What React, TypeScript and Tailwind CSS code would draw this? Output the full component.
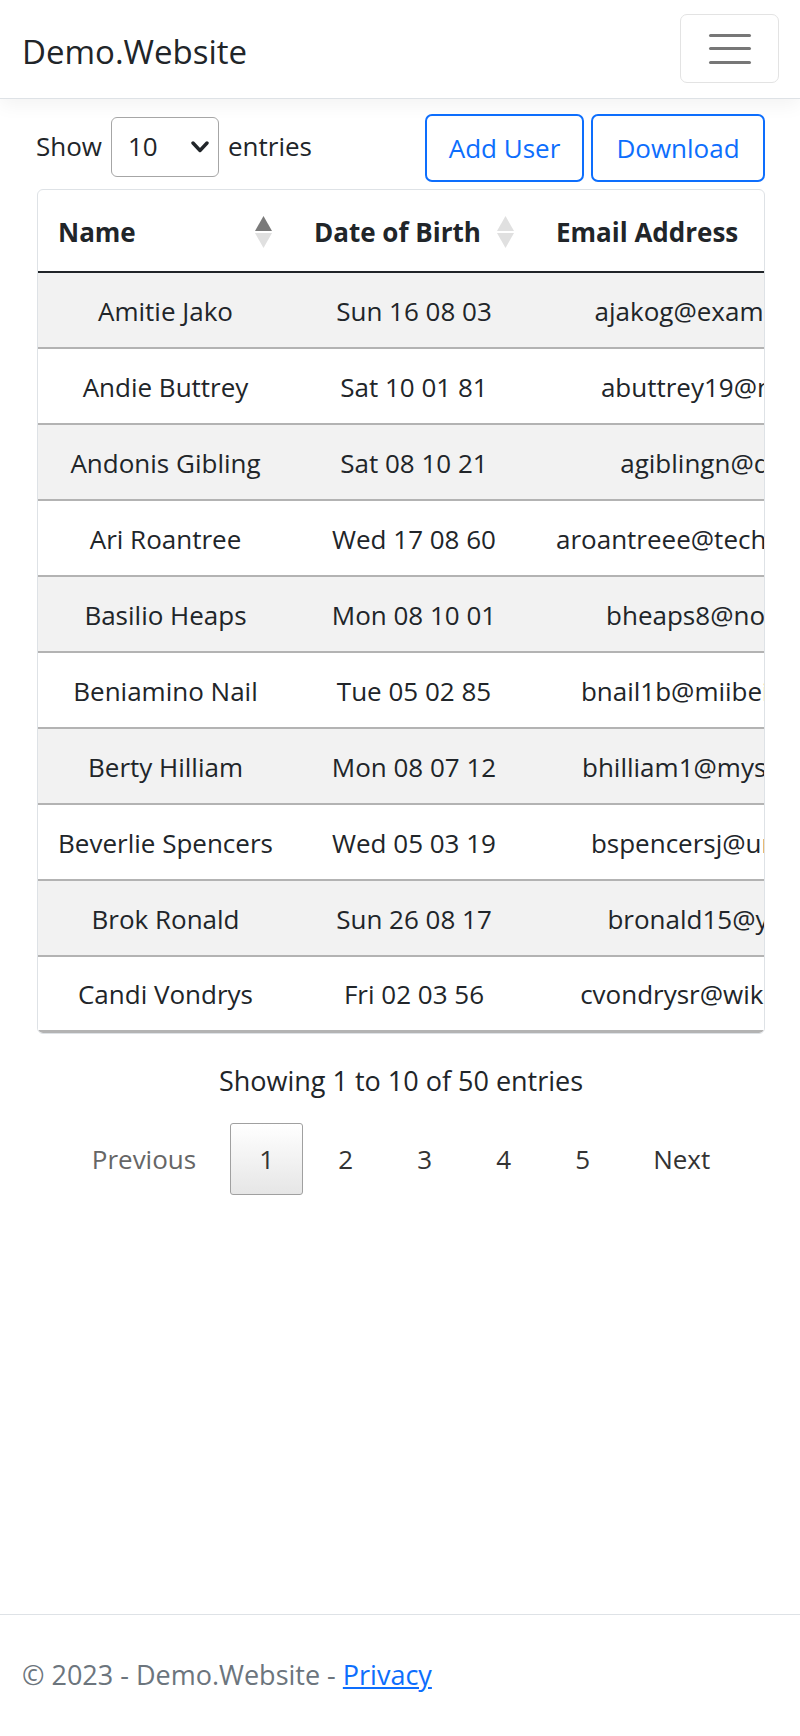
import React from 'react';

interface User {
  name: string;
  dob: string;
  email: string;
}

const users: User[] = [
  { name: 'Amitie Jako', dob: 'Sun 16 08 03', email: 'ajakog@examiner.com' },
  { name: 'Andie Buttrey', dob: 'Sat 10 01 81', email: 'abuttrey19@nasa.gov' },
  { name: 'Andonis Gibling', dob: 'Sat 08 10 21', email: 'agiblingn@qq.com' },
  { name: 'Ari Roantree', dob: 'Wed 17 08 60', email: 'aroantreee@techcrunch.com' },
  { name: 'Basilio Heaps', dob: 'Mon 08 10 01', email: 'bheaps8@nokia.com' },
  { name: 'Beniamino Nail', dob: 'Tue 05 02 85', email: 'bnail1b@miibeian.gov.cn' },
  { name: 'Berty Hilliam', dob: 'Mon 08 07 12', email: 'bhilliam1@myspace.com' },
  { name: 'Beverlie Spencers', dob: 'Wed 05 03 19', email: 'bspencersj@umich.edu' },
  { name: 'Brok Ronald', dob: 'Sun 26 08 17', email: 'bronald15@yale.edu' },
  { name: 'Candi Vondrys', dob: 'Fri 02 03 56', email: 'cvondrysr@wikipedia.org' },
];

const SortIcon: React.FC<{ active?: boolean }> = ({ active }) => (
  <svg width="17" height="32" viewBox="0 0 17 32" className="shrink-0">
    <polygon points="8.5,0 17,15 0,15" fill={active ? '#7a7a7a' : '#e0e0e0'} />
    <polygon points="0,17 17,17 8.5,32" fill="#e0e0e0" />
  </svg>
);

const App: React.FC = () => {
  return (
    <div className="min-h-[1736px] flex flex-col bg-white text-[#212529] font-['Open_Sans',sans-serif] text-[26px]">
      {/* navbar */}
      <nav className="h-[99px] flex items-center justify-between pl-[22px] pr-[21px] border-b border-[#dee2e6] shadow-[0_6px_18px_rgba(0,0,0,0.05)]">
        <span className="text-[33px] leading-none text-[#212529] mt-[4px]">Demo.Website</span>
        <button className="w-[99px] h-[69px] -mt-[1px] border-[1.5px] border-[#e3e3e3] rounded-[7px] flex flex-col items-center justify-center gap-[10.5px]">
          <span className="block w-[42px] h-[3px] rounded-full bg-[#777]"></span>
          <span className="block w-[42px] h-[3px] rounded-full bg-[#777]"></span>
          <span className="block w-[42px] h-[3px] rounded-full bg-[#777]"></span>
        </button>
      </nav>

      <main className="flex-1 pl-[37px] pr-[35px]">
        {/* controls */}
        <div className="pt-[15px] flex items-center justify-between">
          <div className="flex items-center gap-[9px] -ml-[1px] -mt-[3px]">
            <span>Show</span>
            <div className="w-[108px] h-[60px] border-[1.5px] border-[#a6a6a6] rounded-[6px] flex items-center justify-between pl-[16px] pr-[9px]">
              <span>10</span>
              <svg width="18" height="12" viewBox="0 0 18 12">
                <polyline points="2,2 9,9.5 16,2" fill="none" stroke="#212529" strokeWidth="3.4" strokeLinecap="round" strokeLinejoin="round" />
              </svg>
            </div>
            <span>entries</span>
          </div>
          <div className="flex gap-[7px]">
            <button className="w-[159px] h-[68px] border-2 border-[#0d6efd] rounded-[7px] text-[#0d6efd]">Add User</button>
            <button className="w-[174px] h-[68px] border-2 border-[#0d6efd] rounded-[7px] text-[#0d6efd]">Download</button>
          </div>
        </div>

        {/* table */}
        <div className="mt-[7px] border border-[#dee2e6] rounded-[6px] overflow-hidden">
          <table className="border-separate border-spacing-0 whitespace-nowrap">
            <thead>
              <tr>
                <th className="h-[83px] w-[255px] min-w-[255px] pl-[20px] pr-[21px] pt-[3px] border-b-2 border-[#212529] text-left font-bold">
                  <div className="flex items-center justify-between">
                    <span>Name</span>
                    <SortIcon active />
                  </div>
                </th>
                <th className="h-[83px] w-[242px] min-w-[242px] pl-[21px] pr-[21px] pt-[3px] border-b-2 border-[#212529] text-left font-bold">
                  <div className="flex items-center justify-between">
                    <span>Date of Birth</span>
                    <SortIcon />
                  </div>
                </th>
                <th className="h-[83px] px-[21px] pt-[3px] border-b-2 border-[#212529] text-left font-bold">Email Address</th>
              </tr>
            </thead>
            <tbody>
              {users.map((u, i) => {
                const last = i === users.length - 1;
                const cell = `h-[76px] pt-[2px] border-[#b3b3b3] text-center ${last ? 'border-b-[3px]' : 'border-b-2'}`;
                return (
                  <tr key={u.email} className={i % 2 === 0 ? 'bg-[#f2f2f2]' : 'bg-white'}>
                    <td className={`${cell} px-[20px]`}>{u.name}</td>
                    <td className={`${cell} px-[21px]`}>{u.dob}</td>
                    <td className={`${cell} px-[21px]`}>{u.email}</td>
                  </tr>
                );
              })}
            </tbody>
          </table>
        </div>

        {/* info + pagination */}
        <div className="mt-[28px] text-center text-[27px] leading-[38px]">Showing 1 to 10 of 50 entries</div>
        <div className="mt-[23px] flex items-center justify-center gap-[6px]">
          <span className="h-[72px] px-[28px] flex items-center text-[#666]">Previous</span>
          <span className="h-[72px] w-[73px] flex items-center justify-center border border-[#a0a0a0] rounded-[3px] bg-gradient-to-b from-white to-[#e6e6e6] text-[#333]">1</span>
          {[2, 3, 4, 5].map((n) => (
            <span key={n} className="h-[72px] w-[73px] flex items-center justify-center text-[#333]">{n}</span>
          ))}
          <span className="h-[72px] px-[28px] flex items-center text-[#333]">Next</span>
        </div>
      </main>

      {/* footer */}
      <footer className="h-[122px] border-t border-[#dee2e6] flex items-center pl-[22px] text-[27px] text-[#6c757d]">
        <span>
          © 2023 - Demo.Website - <a href="#" className="text-[#0d6efd] underline">Privacy</a>
        </span>
      </footer>
    </div>
  );
};

export default App;
